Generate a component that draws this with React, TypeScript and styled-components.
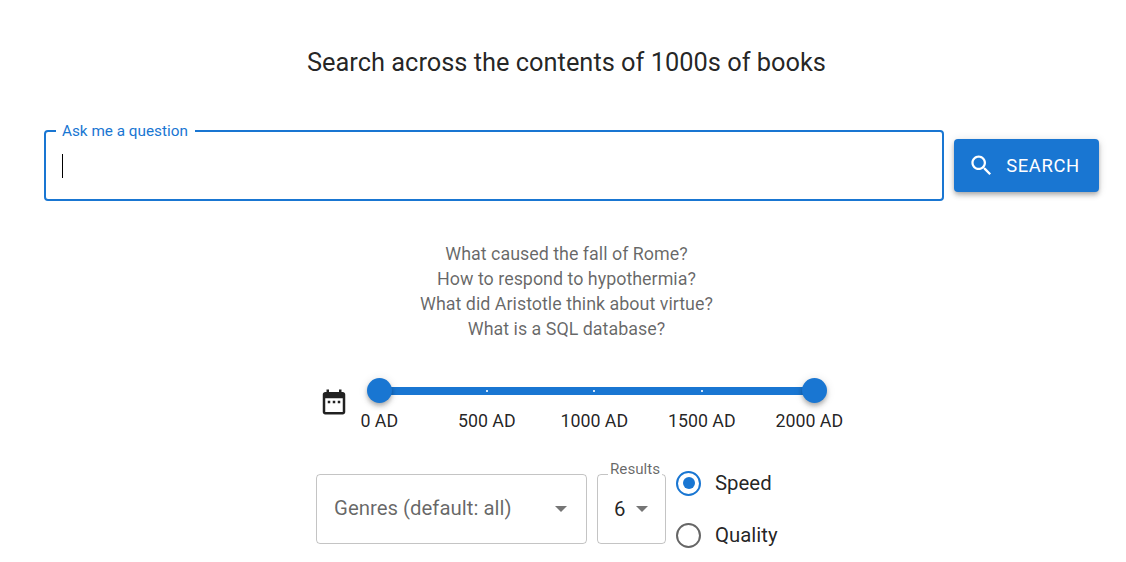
import React from "react";
import styled, { createGlobalStyle } from "styled-components";

const GlobalStyle = createGlobalStyle`
  html, body {
    margin: 0;
    padding: 0;
    background: #fff;
    overflow: hidden;
    font-family: Roboto, "Liberation Sans", sans-serif;
  }
`;

const sampleQuestions = [
  "What caused the fall of Rome?",
  "How to respond to hypothermia?",
  "What did Aristotle think about virtue?",
  "What is a SQL database?",
];

const marks = ["0 AD", "500 AD", "1000 AD", "1500 AD", "2000 AD"];

function App() {
  return (
    <Page>
      <GlobalStyle />
      <Title>Search across the contents of 1000s of books</Title>
      <SearchRow>
        <QuestionField>
          <QuestionLegend>Ask me a question</QuestionLegend>
          <Caret />
        </QuestionField>
        <SearchButton>
          <svg viewBox="0 0 24 24" width="27" height="27" fill="currentColor">
            <path d="M15.5 14h-.79l-.28-.27C15.41 12.59 16 11.11 16 9.5 16 5.91 13.09 3 9.5 3S3 5.91 3 9.5 5.91 16 9.5 16c1.61 0 3.09-.59 4.23-1.57l.27.28v.79l5 4.99L20.49 19l-4.99-5zm-6 0C7.01 14 5 11.99 5 9.5S7.01 5 9.5 5 14 7.01 14 9.5 11.99 14 9.5 14z" />
          </svg>
          Search
        </SearchButton>
      </SearchRow>
      <Questions>
        {sampleQuestions.map((q) => (
          <Question key={q}>{q}</Question>
        ))}
      </Questions>
      <DateRow>
        <CalendarIcon viewBox="0 0 24 24" fill="currentColor">
          <path d="M9 11H7v2h2v-2zm4 0h-2v2h2v-2zm4 0h-2v2h2v-2zm2-7h-1V2h-2v2H8V2H6v2H5c-1.11 0-1.99.9-1.99 2L3 20c0 1.1.89 2 2 2h14c1.1 0 2-.9 2-2V6c0-1.1-.9-2-2-2zm0 16H5V9h14v11z" />
        </CalendarIcon>
        <SliderColumn>
          <Track>
            <Thumb $side="left" />
            <Tick $at={106.5} />
            <Tick $at={213.5} />
            <Tick $at={321.5} />
            <Thumb $side="right" />
          </Track>
          <MarkLabels>
            {marks.map((m) => (
              <MarkLabel key={m}>{m}</MarkLabel>
            ))}
          </MarkLabels>
        </SliderColumn>
      </DateRow>
      <FilterRow>
        <GenreSelect>
          <GenrePlaceholder>Genres (default: all)</GenrePlaceholder>
          <Arrow />
        </GenreSelect>
        <ResultsSelect>
          <ResultsLegend>Results</ResultsLegend>
          <ResultsValue>
            6
            <Arrow />
          </ResultsValue>
        </ResultsSelect>
        <RadioGroup>
          <RadioRow>
            <RadioCircle $checked />
            Speed
          </RadioRow>
          <RadioRow>
            <RadioCircle />
            Quality
          </RadioRow>
        </RadioGroup>
      </FilterRow>
    </Page>
  );
}

export default App;

const Page = styled.div`
  box-sizing: border-box;
  width: 1126px;
  height: 562px;
  padding: 46px 0 0 7px;
  display: flex;
  flex-direction: column;
  align-items: center;
  overflow: hidden;
`;
const Title = styled.h1`
  margin: 0;
  font-size: 25.4px;
  font-weight: 400;
  line-height: 32px;
  color: rgba(0, 0, 0, 0.87);
`;
const SearchRow = styled.div`
  align-self: flex-start;
  margin: 45px 0 0 37px;
  display: flex;
  align-items: flex-start;
  gap: 10px;
`;
const QuestionField = styled.fieldset`
  box-sizing: border-box;
  width: 900px;
  height: 78px;
  margin: 0;
  padding: 0 16px;
  border: 2px solid #1976d2;
  border-radius: 4px;
  display: flex;
  align-items: center;
`;
const QuestionLegend = styled.legend`
  margin-left: -6px;
  padding: 0 7px 0 6px;
  font-size: 15.3px;
  line-height: 16px;
  color: #1976d2;
`;
const Caret = styled.span`
  width: 1px;
  height: 24px;
  margin-top: -6px;
  background: #000;
`;
const SearchButton = styled.button`
  box-sizing: border-box;
  width: 145px;
  height: 53px;
  margin-top: 16px;
  padding: 0 5px 0 0;
  border: 0;
  border-radius: 4px;
  background: #1976d2;
  color: #fff;
  font-family: inherit;
  font-size: 18.4px;
  font-weight: 400;
  letter-spacing: 0.65px;
  text-transform: uppercase;
  display: flex;
  align-items: center;
  justify-content: center;
  gap: 11px;
  box-shadow: 0 2px 4px -1px rgba(0, 0, 0, 0.2), 0 4px 5px 0 rgba(0, 0, 0, 0.14),
    0 1px 10px 0 rgba(0, 0, 0, 0.12);
`;
const Questions = styled.div`
  margin-top: 40px;
  display: flex;
  flex-direction: column;
  align-items: center;
`;
const Question = styled.div`
  font-size: 17.9px;
  line-height: 25px;
  color: rgba(0, 0, 0, 0.6);
`;
const DateRow = styled.div`
  align-self: flex-start;
  margin: 36.5px 0 0 312px;
  display: flex;
  align-items: flex-end;
  gap: 11px;
`;
const CalendarIcon = styled.svg`
  width: 30px;
  height: 30px;
  color: rgba(0, 0, 0, 0.87);
  margin-bottom: 16px;
`;
const SliderColumn = styled.div`
  width: 470px;
  display: flex;
  flex-direction: column;
`;
const Track = styled.div`
  position: relative;
  width: 435px;
  height: 8px;
  margin: 9px 0 0 19.5px;
  background: #1976d2;
  border-radius: 4px;
`;
const Thumb = styled.span<{ $side: "left" | "right" }>`
  position: absolute;
  top: -8.5px;
  ${(p) => p.$side}: -12.5px;
  width: 25px;
  height: 25px;
  border-radius: 50%;
  background: #1976d2;
  box-shadow: 0 2px 4px -1px rgba(0, 0, 0, 0.2), 0 4px 5px 0 rgba(0, 0, 0, 0.14),
    0 1px 10px 0 rgba(0, 0, 0, 0.12);
`;
const Tick = styled.span<{ $at: number }>`
  position: absolute;
  left: ${(p) => p.$at}px;
  top: 3px;
  width: 2px;
  height: 2px;
  background: rgba(255, 255, 255, 0.8);
`;
const MarkLabels = styled.div`
  display: grid;
  grid-template-columns: repeat(5, 107.5px);
  margin-top: 14.5px;
  margin-left: -34.5px;
`;
const MarkLabel = styled.span`
  justify-self: center;
  white-space: nowrap;
  font-size: 17.8px;
  line-height: 24px;
  color: rgba(0, 0, 0, 0.87);
`;
const FilterRow = styled.div`
  align-self: flex-start;
  margin: 26px 0 0 309px;
  display: flex;
  gap: 10px;
`;
const GenreSelect = styled.div`
  box-sizing: border-box;
  width: 271px;
  height: 70px;
  margin-top: 15px;
  padding: 0 19px 0 17px;
  border: 1px solid rgba(0, 0, 0, 0.23);
  border-radius: 4px;
  display: flex;
  align-items: center;
  justify-content: space-between;
`;
const GenrePlaceholder = styled.span`
  margin-top: -2px;
  font-size: 20.4px;
  color: rgba(0, 0, 0, 0.6);
`;
const Arrow = styled.span`
  width: 0;
  height: 0;
  border-left: 6px solid transparent;
  border-right: 6px solid transparent;
  border-top: 6px solid rgba(0, 0, 0, 0.54);
`;
const ResultsSelect = styled.fieldset`
  box-sizing: border-box;
  width: 69px;
  height: 85px;
  margin: 0;
  padding: 0;
  border: 1px solid rgba(0, 0, 0, 0.23);
  border-radius: 4px;
`;
const ResultsLegend = styled.legend`
  margin-left: 10px;
  padding: 0 2px 10px;
  font-size: 15.2px;
  line-height: 20px;
  color: rgba(0, 0, 0, 0.6);
`;
const ResultsValue = styled.div`
  height: 40px;
  padding: 0 17px 0 16px;
  display: flex;
  align-items: center;
  justify-content: space-between;
  font-size: 20.4px;
  color: rgba(0, 0, 0, 0.87);
`;
const RadioGroup = styled.div`
  display: flex;
  flex-direction: column;
  gap: 26px;
  margin-top: 11px;
`;
const RadioRow = styled.label`
  display: flex;
  align-items: center;
  gap: 14px;
  height: 26px;
  font-size: 20.4px;
  color: rgba(0, 0, 0, 0.87);
`;
const RadioCircle = styled.span<{ $checked?: boolean }>`
  box-sizing: border-box;
  width: 25px;
  height: 25px;
  border-radius: 50%;
  border: 2.5px solid ${(p) => (p.$checked ? "#1976d2" : "rgba(0, 0, 0, 0.6)")};
  display: flex;
  align-items: center;
  justify-content: center;
  &::after {
    content: "";
    width: 12px;
    height: 12px;
    border-radius: 50%;
    background: ${(p) => (p.$checked ? "#1976d2" : "transparent")};
  }
`;
